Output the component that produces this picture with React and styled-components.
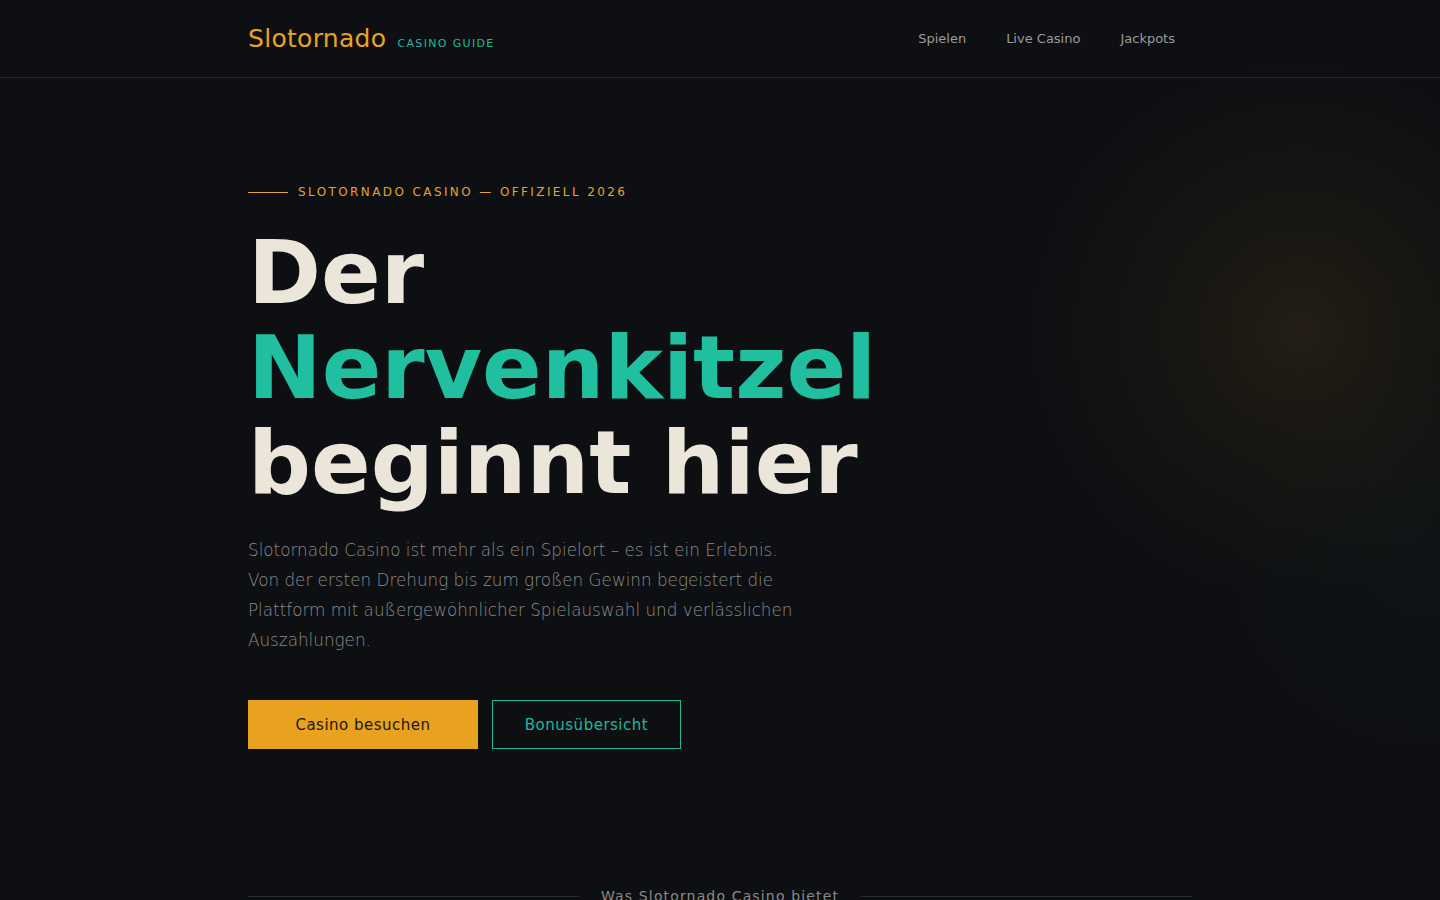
import React from "react";
import styled, { createGlobalStyle } from "styled-components";

const GlobalStyle = createGlobalStyle`
  * {
    box-sizing: border-box;
  }
  html, body {
    margin: 0;
    padding: 0;
    background: #0d0f12;
    font-family: "DejaVu Sans", "Noto Sans", sans-serif;
    overflow: hidden;
  }
`;

const Page = styled.div`
  min-height: 100vh;
  background-color: #0d0f12;
  background-image: radial-gradient(
      circle 270px at 1300px 330px,
      rgba(232, 160, 40, 0.1) 0%,
      rgba(232, 160, 40, 0.05) 40%,
      rgba(232, 160, 40, 0) 100%
    ),
    radial-gradient(
      circle 200px at 1420px 560px,
      rgba(31, 191, 159, 0.025) 0%,
      rgba(31, 191, 159, 0) 100%
    );
`;

const Header = styled.header`
  height: 78px;
  border-bottom: 1px solid #23262a;
`;

const Inner = styled.div`
  width: 944px;
  margin: 0 auto;
`;

const HeaderRow = styled(Inner)`
  height: 77px;
  display: flex;
  align-items: center;
  justify-content: space-between;
`;

const Brand = styled.div`
  display: flex;
  align-items: baseline;
  gap: 11px;
`;

const Logo = styled.span`
  color: #e8a326;
  font-size: 25px;
  letter-spacing: 0.3px;
`;

const Tagline = styled.span`
  color: #1fb99a;
  font-size: 11px;
  letter-spacing: 1.35px;
`;

const Nav = styled.nav`
  display: flex;
  margin-right: -3px;
`;

const NavLink = styled.a`
  color: #9b9b9b;
  font-size: 13px;
  padding: 0 20px;
  text-decoration: none;
`;

const Hero = styled.section`
  padding: 106px 0 139px;
`;

const Eyebrow = styled.div`
  display: flex;
  align-items: center;
  gap: 10px;
  height: 16px;
  color: #e3a330;
  font-size: 12px;
  letter-spacing: 2.4px;
`;

const EyebrowLine = styled.span`
  width: 40px;
  height: 1px;
  background: #e3a330;
`;

const Title = styled.h1`
  margin: 25px 0 0;
  font-size: 88px;
  line-height: 95px;
  font-weight: 700;
  color: #ece6da;
`;

const TitleLine = styled.span`
  display: block;
  color: ${({ $accent }) => ($accent ? "#1fbf9f" : "#ece6da")};
`;

const Lead = styled.p`
  margin: 25px 0 0;
  max-width: 560px;
  color: #8c8c8c;
  font-size: 16.8px;
  font-weight: 300;
  line-height: 30px;
`;

const Actions = styled.div`
  display: flex;
  gap: 14px;
  margin-top: 45px;
`;

const Button = styled.a`
  display: flex;
  align-items: center;
  justify-content: center;
  height: 49px;
  width: ${({ $w }) => $w}px;
  font-size: 15px;
  letter-spacing: 0.5px;
  text-decoration: none;
  background: ${({ $primary }) => ($primary ? "#e8a220" : "transparent")};
  color: ${({ $primary }) => ($primary ? "#1b1812" : "#1fb99a")};
  border: 1px solid ${({ $primary }) => ($primary ? "#e8a220" : "#1fb99a")};
`;

const SectionHead = styled(Inner)`
  display: flex;
  align-items: center;
  gap: 22px;
  color: #8a8a8a;
  font-size: 14px;
  letter-spacing: 1.15px;
`;

const Rule = styled.span`
  flex: 1;
  height: 1px;
  background: #2a2d31;
`;

const App = () => {
  return (
    <Page>
      <GlobalStyle />
      <Header>
        <HeaderRow>
          <Brand>
            <Logo>Slotornado</Logo>
            <Tagline>CASINO GUIDE</Tagline>
          </Brand>
          <Nav>
            <NavLink href="#">Spielen</NavLink>
            <NavLink href="#">Live Casino</NavLink>
            <NavLink href="#">Jackpots</NavLink>
          </Nav>
        </HeaderRow>
      </Header>
      <Hero>
        <Inner>
          <Eyebrow>
            <EyebrowLine />
            SLOTORNADO CASINO — OFFIZIELL 2026
          </Eyebrow>
          <Title>
            <TitleLine>Der</TitleLine>
            <TitleLine $accent>Nervenkitzel</TitleLine>
            <TitleLine>beginnt hier</TitleLine>
          </Title>
          <Lead>
            Slotornado Casino ist mehr als ein Spielort – es ist ein Erlebnis.
            Von der ersten Drehung bis zum großen Gewinn begeistert die
            Plattform mit außergewöhnlicher Spielauswahl und verlässlichen
            Auszahlungen.
          </Lead>
          <Actions>
            <Button href="#" $primary $w={230}>
              Casino besuchen
            </Button>
            <Button href="#" $w={189}>
              Bonusübersicht
            </Button>
          </Actions>
        </Inner>
      </Hero>
      <SectionHead>
        <Rule />
        Was Slotornado Casino bietet
        <Rule />
      </SectionHead>
    </Page>
  );
};

export default App;
